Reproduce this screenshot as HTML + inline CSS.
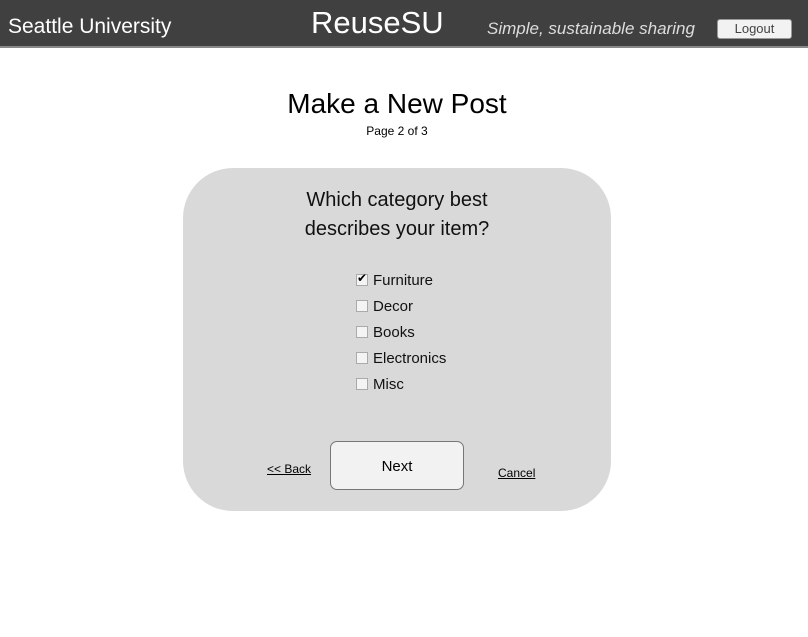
<!DOCTYPE html>
<html><head><style>
body{margin:0;width:808px;height:637px;background:#fff;font-family:"Liberation Sans",sans-serif;position:relative;overflow:hidden}
.hd{position:absolute;left:0;top:0;width:808px;height:46px;background:#404040;border-bottom:2px solid #888}
.t{position:absolute;white-space:nowrap}
.cb{position:absolute;left:356px;width:10px;height:10px;border:1px solid #aaa;background:#f4f4f4}
.lb{position:absolute;left:373px;font-size:15px;color:#111}
</style></head><body>
<div class="hd">
<div class="t" style="left:8px;top:15px;font-size:21px;color:#fff">Seattle University</div>
<div class="t" style="left:311px;top:5px;font-size:31px;color:#fff">ReuseSU</div>
<div class="t" style="left:487px;top:19px;font-size:17px;color:#ddd;font-style:italic">Simple, sustainable sharing</div>
<div class="t" style="left:717px;top:19px;width:73px;height:18px;background:#f2f2f2;border:1px solid #999;border-radius:3px;font-size:13px;color:#444;text-align:center;line-height:18px">Logout</div>
</div>
<div class="t" style="left:0;width:794px;text-align:center;top:88px;font-size:28px;color:#000">Make a New Post</div>
<div class="t" style="left:0;width:794px;text-align:center;top:124px;font-size:12px;color:#000">Page 2 of 3</div>
<div style="position:absolute;left:183px;top:168px;width:428px;height:343px;background:#d9d9d9;border-radius:50px"></div>
<div class="t" style="left:183px;width:428px;text-align:center;top:186px;font-size:20px;line-height:29px;color:#111">Which category best<br>describes your item?</div>
<div class="cb" style="top:274px"></div><div class="t" style="left:357px;top:271px;font-size:12px">✔</div><div class="lb t" style="top:272px">Furniture</div>
<div class="cb" style="top:300px"></div><div class="lb t" style="top:298px">Decor</div>
<div class="cb" style="top:326px"></div><div class="lb t" style="top:324px">Books</div>
<div class="cb" style="top:352px"></div><div class="lb t" style="top:350px">Electronics</div>
<div class="cb" style="top:378px"></div><div class="lb t" style="top:376px">Misc</div>
<div class="t" style="left:267px;top:462px;font-size:12px;text-decoration:underline">&lt;&lt; Back</div>
<div class="t" style="left:330px;top:441px;width:132px;height:47px;background:#f2f2f2;border:1px solid #777;border-radius:7px;text-align:center;line-height:49px;font-size:15px">Next</div>
<div class="t" style="left:498px;top:466px;font-size:12px;text-decoration:underline">Cancel</div>
</body></html>
